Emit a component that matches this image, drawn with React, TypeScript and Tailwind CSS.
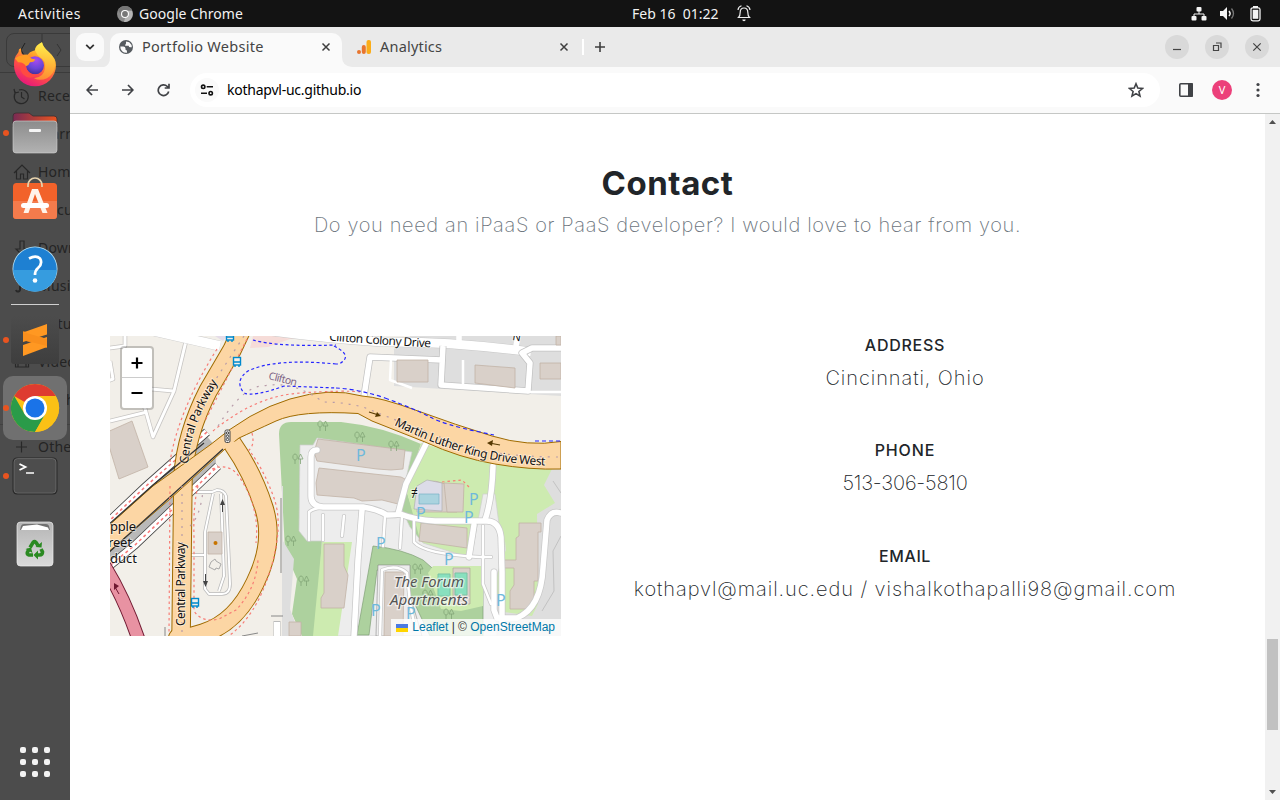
import React from "react";

const ui = "font-['Noto_Sans','Open_Sans',sans-serif]";
const brand = "font-['Inter','Liberation_Sans',sans-serif]";

/* ---------- top panel ---------- */

function TopPanel() {
  return (
    <header className={`${ui} flex h-[27px] shrink-0 items-center bg-[#131313] text-[14px] leading-[27px] text-[#f2f2f2]`}>
      <span className="w-[117px] pl-[18px] tracking-[0.45px]">Activities</span>
      <svg width="16" height="16" viewBox="0 0 16 16">
        <circle cx="8" cy="8" r="8" fill="#8a8a8a" />
        <path d="M8 0a8 8 0 0 1 7 4H8a4 4 0 0 0-3.6 5.5L1 4a8 8 0 0 1 7-4Z" fill="#767676" />
        <path d="M12 8a4 4 0 0 1-4 4l-1 4a8 8 0 0 0 8-11h-4.500Z" fill="#b5b5b5" />
        <circle cx="8" cy="8" r="4" fill="#fff" />
        <circle cx="8" cy="8" r="2.900" fill="#777" />
      </svg>
      <span className="ml-[6px] w-[493px] tracking-[0.04px]">Google Chrome</span>
      <span className="w-[105px] whitespace-pre tracking-[0px]">Feb 16  01:22</span>
      <svg width="14" height="17" viewBox="0 0 14 17" fill="none" stroke="#eee" strokeWidth="1.200">
        <path d="M1.500 12.500h11c-1.400-1.300-1.700-2.600-1.700-5.300C10.800 4.500 9.500 3 7 3S3.200 4.500 3.200 7.200c0 2.700-.3 4-1.700 5.300Z" />
        <path d="M5.300 14.500a1.700 1.700 0 0 0 3.400 0Z" fill="#eee" stroke="none" />
        <path d="M1 5C1.200 3 2.300 1.500 4.500.8M13 5c-.2-2-1.300-3.500-3.500-4.200" />
      </svg>
      <div className="ml-auto flex items-center gap-[13px] pr-[18px]">
        <svg width="16" height="14" viewBox="0 0 16 14" fill="#f4f4f4">
          <rect x="5.500" width="5" height="4.500" rx="1" />
          <rect x="0.500" y="9" width="5" height="4.500" rx="1" />
          <rect x="10.500" y="9" width="5" height="4.500" rx="1" />
          <path d="M8 4v3M3 9.500V7h10v2.500" fill="none" stroke="#f4f4f4" strokeWidth="1" />
        </svg>
        <svg width="15" height="15" viewBox="0 0 15 15">
          <path d="M0 5h3l4-4v13l-4-4H0Z" fill="#f4f4f4" />
          <path d="M9 5q2.200 2.500 0 5" fill="none" stroke="#f4f4f4" strokeWidth="1.500" />
          <path d="M11.500 2.500q4 5 0 10" fill="none" stroke="#777" strokeWidth="1.300" />
        </svg>
        <svg width="14" height="16" viewBox="0 0 14 16">
          <rect x="3" y="1.800" width="9" height="13" rx="1.800" fill="none" stroke="#f4f4f4" strokeWidth="1.300" />
          <rect x="5" y="0" width="5" height="2" fill="#f4f4f4" />
          <rect x="4.700" y="3.800" width="5.600" height="9" fill="#f4f4f4" />
        </svg>
      </div>
    </header>
  );
}

/* ---------- dock ---------- */

const places = ["Recent", "Starred", "Home", "Documents", "Downloads", "Music", "Pictures", "Videos", "Trash"];

function FilesWindow() {
  return (
    <div className={`${ui} absolute inset-0 overflow-hidden text-[14px] tracking-[0.2px] text-[#242424]`}>
      <div className="h-[46px] border-b border-[#3b3b3b] pl-[6px] pt-[6px]">
        <div className="h-[34px] w-[80px] rounded-lg border border-[#3a3a3a]">
          <svg width="70" height="32" fill="none" stroke="#343434">
            <path d="M35 0v32" /><path d="M18 9l-4 7 4 7" stroke="#202020" /><path d="M50 10l4 6-4 6" />
          </svg>
        </div>
      </div>
      <div className="pt-[4px]">
        {places.map((p) => (
          <div key={p} className="flex h-[38px] items-center pl-[38px] leading-none">{p}</div>
        ))}
      </div>
      <div className="mt-[5px] flex h-[44px] items-center border-t border-[#414141] pl-[38px]">Other</div>
      <svg className="absolute inset-0" width="70" height="460" fill="none" stroke="#282828" strokeWidth="1.200">
        <path d="M16 65a7 7 0 1 0 3-2M14 62l1 4 4-1M21.500 65v5l3 2" />
        <path d="M14 146l8-8 8 8M16.500 144v8h4v-5h3v5h4v-8" />
        <path d="M20 214h4v8h4l-6 6-6-6h4Z" />
        <path d="M20 263v-9l9-2v8M20 262a2 2 0 1 1-4 1" strokeWidth="2" />
        <path d="M15.500 329h13v11h-13ZM18 329v11M26 329v11" />
        <path d="M16 420h11M21.500 414.500v11" />
      </svg>
    </div>
  );
}

function Slot({ active, running, className, children }: { active?: boolean; running?: boolean; className?: string; children: React.ReactNode }) {
  return (
    <div className={`relative h-[64px] w-[70px] shrink-0 ${className ?? ""}`}>
      <svg width="70" height="64" viewBox="0 0 70 64">
        {active && <rect x="3" y="0" width="64" height="64" rx="10" fill="#707070" />}
        {running && <circle cx="6" cy="32" r="3" fill="#e95420" />}
        {children}
      </svg>
    </div>
  );
}

function Dock() {
  return (
    <aside className="relative flex w-[70px] shrink-0 flex-col gap-[4px] bg-[#4c4c4c] pb-[6px] pt-[6px]">
      <FilesWindow />
      <Slot>
        <defs>
          <linearGradient id="ff" x1=".8" y1="0" x2=".3" y2="1">
            <stop offset="0" stopColor="#fff44f" /><stop offset=".35" stopColor="#ffa52a" />
            <stop offset=".65" stopColor="#ff4f45" /><stop offset="1" stopColor="#e5157e" />
          </linearGradient>
          <radialGradient id="ffp" cx=".55" cy=".2" r=".8">
            <stop offset="0" stopColor="#a94cf0" /><stop offset=".6" stopColor="#6a45d8" /><stop offset="1" stopColor="#452f9e" />
          </radialGradient>
          <linearGradient id="fy" x1="0" y1="0" x2="0" y2="1">
            <stop offset="0" stopColor="#fff14d" /><stop offset="1" stopColor="#ff982f" />
          </linearGradient>
        </defs>
        <g transform="translate(0 -.7)">
          <path d="M21 16q0 4 1 6l5 1 3-3q2-1 5-2 0-5 7-8 1 5 7 10 7 6 7 13A21 21 0 0 1 14 33q0-8 3-11 2-2 2-5Z" fill="url(#ff)" />
          <path d="M42 10q1 5 6 9 8 7 7 15-1 8-8 12-7 3-13 0 10-1 11-10 1-8-5-11-3-2-5-7 1-5 7-8Z" fill="url(#fy)" opacity=".85" />
          <circle cx="35" cy="33" r="9" fill="url(#ffp)" />
          <path d="M15 26q4-3 8-3 5-2 6 1 2 3 6 3 0 3-5 3-1 3-4 4-3-5-8-4Z" fill="#ff9d25" />
          <path d="M20 31q5 0 6 4 2 8 12 7-8 7-15 0-4-5-3-11Z" fill="#ff4a42" />
        </g>
      </Slot>
      <Slot running>
        <defs>
          <linearGradient id="fo" x1="0" x2="1"><stop offset="0" stopColor="#7a2a53" /><stop offset="1" stopColor="#e95420" /></linearGradient>
          <linearGradient id="fg" x1="0" y1="0" x2="0" y2="1"><stop offset="0" stopColor="#8c8c8c" /><stop offset="1" stopColor="#b2b2b2" /></linearGradient>
        </defs>
        <g transform="translate(0 -1)">
          <path d="M13 16q0-3 3-3h13l4 3h21q3 0 3 3v8H13Z" fill="url(#fo)" stroke="#3a2d30" strokeWidth=".8" />
          <rect x="13" y="21" width="44" height="32" rx="3" fill="url(#fg)" stroke="#d5d5d5" strokeWidth=".6" />
          <rect x="29" y="29" width="12" height="3" rx="1" fill="#f5f5f5" />
        </g>
      </Slot>
      <Slot>
        <rect x="13" y="14" width="44" height="36" rx="3.500" fill="#f2622a" />
        <path d="M13 32h44v14.500q0 3.500-3.500 3.500h-37q-3.500 0-3.500-3.500Z" fill="#f47b4c" />
        <path d="M28 18v-2a7 7 0 0 1 14 0v2" fill="none" stroke="#e8d3ad" strokeWidth="1.700" />
        <path d="M32 20h6l9.500 24h-5L35 25l-6.500 19H23.500Z" fill="#fff4ea" />
        <rect x="21" y="34" width="28" height="5" rx="2.500" fill="#fff" />
      </Slot>
      <Slot>
        <circle cx="35" cy="32" r="22.500" fill="#b8e2f5" />
        <circle cx="35" cy="32" r="21.700" fill="#1e80d2" />
        <path d="M13.300 33h43.400a21.700 21.700 0 0 1-43.400 0Z" fill="#369cdf" />
        <path d="M29 21.500q7-3.800 11 0 3 5-2 9.500-3 2.500-3 7" fill="none" stroke="#fff" strokeWidth="2.700" />
        <circle cx="35" cy="43.500" r="2.300" fill="#fff" />
      </Slot>
      <div className="relative mx-[11px] -mt-[1px] -mb-[1px] h-px shrink-0 bg-[#d0d0d0]" />
      <Slot running>
        <defs><linearGradient id="sb" x1="0" y1="0" x2="0" y2="1"><stop offset="0" stopColor="#4c4c4c" /><stop offset="1" stopColor="#3e3e3e" /></linearGradient></defs>
        <rect x="11" y="8" width="48" height="48" rx="3" fill="url(#sb)" />
        <path d="M23 32l24 8v-9l-24-8Z" fill="#d97b16" />
        <path d="M23 24.500L47 16v10.500L23 34Z" fill="#ff9822" />
        <path d="M23 37l24-8v10L23 48Z" fill="#ff9822" />
        <path d="M23 32V24l24 7v7Z" fill="#f98f1d" />
      </Slot>
      <Slot active running>
        <circle cx="35" cy="32" r="24" fill="#fbc116" />
        <path d="M35 32L14.200 20A24 24 0 0 1 55.800 20H35Z" fill="#de3b30" />
        <path d="M14.200 20A24 24 0 0 0 35 56l10.400-18L35 32l-10.400 6Z" fill="#2a9b49" />
        <path d="M35 20h20.800a24 24 0 0 1-20.800 36l10.400-18Z" fill="#fbc116" />
        <circle cx="35" cy="32" r="12" fill="#fff" />
        <circle cx="35" cy="32" r="9.500" fill="#1a73e8" />
      </Slot>
      <Slot running>
        <rect x="12.500" y="13.500" width="45" height="37" rx="4.500" fill="#292929" />
        <rect x="14" y="14.600" width="42" height="34.500" rx="3.500" fill="#4d4d4d" stroke="#777" strokeWidth=".7" />
        <path d="M19.500 20l6 3-6 3" fill="none" stroke="#fff" strokeWidth="1.800" />
        <path d="M26 29h8" stroke="#fff" strokeWidth="1.500" />
      </Slot>
      <Slot>
        <defs><linearGradient id="tr" x1="0" y1="0" x2="0" y2="1"><stop offset="0" stopColor="#b5b5b5" /><stop offset="1" stopColor="#dadada" /></linearGradient></defs>
        <rect x="17" y="10" width="36" height="44" rx="3.500" fill="url(#tr)" stroke="#efefef" strokeWidth=".7" />
        <path d="M20 18l1-4q.5-2 3-2h22q2.500 0 3 2l1 4Z" fill="#707070" />
        <path d="M21 18l2-4 14-1.500 11 3 1 2.500Z" fill="#fff" />
        <g fill="none" stroke="#2b8a22" strokeWidth="3.600">
          <path d="M30 35.500l3-5q1.500-1.500 3 0l2 3" />
          <path d="M41 37l1.500 3q0 3-3 3h-2" />
          <path d="M33 43h-4q-2.500-.5-1.500-3l1.500-2.500" />
        </g>
        <path d="M35.500 35l6 .5 .5-5.500ZM38 38.500l-4.500 4.500 4.500 4.500ZM25.500 37l5.500-1.500 1.500 5.500Z" fill="#2b8a22" />
      </Slot>
      <Slot className="mt-auto">
        {[0, 1, 2].map((r) => [0, 1, 2].map((c) => (
          <rect key={`${r}${c}`} x={20 + c * 12} y={17 + r * 12} width="6" height="6" rx="2" fill="#f3f3f3" />
        )))}
      </Slot>
    </aside>
  );
}

/* ---------- browser chrome ---------- */

function Close() {
  return (
    <svg width="10" height="10" viewBox="0 0 10 10" stroke="#3f3f3f" strokeWidth="1.500"><path d="M1.500 1.500l7 7M8.500 1.500l-7 7" /></svg>
  );
}

function TabStrip() {
  return (
    <div className={`${ui} flex h-[40px] bg-[#eaeaea] text-[14.500px] leading-[20px] text-[#444]`}>
      <div className="ml-[6px] mt-[6px] flex size-[28px] items-center justify-center rounded-[9px] bg-[#fafafa]">
        <svg width="10" height="6" fill="none" stroke="#333" strokeWidth="1.800"><path d="M1.200 .8L5 4.600 8.800 .8" /></svg>
      </div>
      <svg className="mt-auto" width="6" height="10"><path d="M6 0v10H0Q6 8 6 0Z" fill="#fafafa" /></svg>
      <div className="mt-[6px] flex h-[34px] w-[232px] items-center rounded-t-[10px] bg-[#fafafa] pb-[6px] pl-[9px]">
        <svg width="14" height="14" viewBox="0 0 14 14">
          <circle cx="7" cy="7" r="7" fill="#565b60" />
          <path d="M1.300 6.500h3q2.200 0 2.200 2v1.300q1.500 0 1.500 1.700v1.200a5.800 5.800 0 0 1-6.700-6.200ZM7 3.200V1.400l3.300.8q2.500 2 2.500 5h-1.500q-1.600 0-1.600-1.500H6.200V4.500q.8 0 .8-1.300Z" fill="#fafafa" />
        </svg>
        <span className="ml-[9px] pb-[2px] tracking-[0.28px]">Portfolio Website</span>
        <span className="ml-auto mr-[11px]"><Close /></span>
      </div>
      <svg className="mt-auto" width="10" height="10"><path d="M0 0v10h10Q0 9 0 0Z" fill="#fafafa" /></svg>
      <div className="flex h-[40px] w-[216px] items-center pl-[5px]">
        <svg width="14" height="14" viewBox="0 0 14 14">
          <circle cx="2" cy="12" r="2" fill="#e8752e" /><rect x="4.800" y="5" width="4" height="9" rx="2" fill="#e8752e" /><rect x="9.500" width="4.500" height="14" rx="2" fill="#fbad18" />
        </svg>
        <span className="ml-[9px] pb-[2px] tracking-[0.2px]">Analytics</span>
        <span className="ml-auto mr-[-1px]"><Close /></span>
      </div>
      <div className="ml-[14px] mt-[12px] h-[16px] w-[2px] bg-white" />
      <svg className="ml-[10px] mt-[14px]" width="12" height="12" stroke="#3f3f3f" strokeWidth="1.600"><path d="M6 1v10M1 6h10" /></svg>
      <div className="ml-auto mr-[11px] flex items-center gap-[16px]">
        {["M8 14.500h8", "M8.500 10.500h5v5h-5ZM11 8h5v5", "M8.300 8.300l7.400 7.400M15.700 8.300l-7.400 7.400"].map((d) => (
          <svg key={d} width="24" height="24" fill="none" stroke="#444" strokeWidth="1.200"><circle cx="12" cy="12" r="12" fill="#d9d9d9" stroke="none" /><path d={d} /></svg>
        ))}
      </div>
    </div>
  );
}

function Toolbar() {
  return (
    <div className="flex h-[47px] items-center border-b border-[#c5c7c5] bg-[#fafafa]">
      <svg className="ml-[16px]" width="12" height="12" fill="none" stroke="#404246" strokeWidth="1.700"><path d="M12 6H1.300M6 1L1.100 6 6 11" /></svg>
      <svg className="ml-[24px]" width="12" height="12" fill="none" stroke="#404246" strokeWidth="1.700"><path d="M0 6h10.700M6 1l4.900 5L6 11" /></svg>
      <svg className="ml-[23px]" width="13" height="14" fill="none" stroke="#404246" strokeWidth="1.700"><path d="M11.700 8.500A5.300 5.300 0 1 1 10.300 3.500L12 5M12 .7V5H7.700" /></svg>
      <div className="ml-[20px] flex h-[34px] w-[970px] items-center rounded-full bg-white pl-[5px]">
        <div className="flex size-[24px] items-center justify-center rounded-full bg-[#fafafa]">
          <svg width="14" height="12" fill="none" stroke="#111" strokeWidth="1.600"><circle cx="3.200" cy="2.800" r="1.700" /><path d="M6.700 2.800H13M1 9.200h6" /><circle cx="10.700" cy="9.200" r="1.700" /></svg>
        </div>
        <span className={`${ui} ml-[8px] pb-[1px] text-[14px] tracking-[-0.24px] text-black`}>kothapvl-uc.github.io</span>
        <svg className="ml-auto mr-[16px]" width="16" height="16" viewBox="0 0 16 16" fill="none" stroke="#404246" strokeWidth="1.600"><path d="M8 1.800l1.800 4.300 4.700.4-3.600 3 1.100 4.600L8 11.600l-4 2.500 1.100-4.600-3.600-3 4.700-.4Z" /></svg>
      </div>
      <svg className="ml-[19px]" width="14" height="14"><rect x=".8" y=".8" width="12.400" height="12.400" rx="1" fill="none" stroke="#404246" strokeWidth="1.600" /><path d="M9 0h4q1 0 1 1v12q0 1-1 1H9Z" fill="#404246" /></svg>
      <div className={`${ui} ml-[19px] flex size-[20px] items-center justify-center rounded-full bg-[#ec407a] text-[11px] text-white`}>V</div>
      <svg className="ml-[24px]" width="4" height="16" fill="#404246"><circle cx="2" cy="2.500" r="1.600" /><circle cx="2" cy="8" r="1.600" /><circle cx="2" cy="13.500" r="1.600" /></svg>
    </div>
  );
}

/* ---------- map ---------- */

const parking = [[251, 119], [364, 163], [311, 177], [359, 181], [271, 207], [339, 223], [391, 264], [266, 274], [301, 277]];
const trees = [[250, 101], [284, 110], [188, 123], [181, 205], [194, 245], [308, 233], [318, 259], [339, 278], [213, 90]];

function Map() {
  return (
    <div className="relative h-[300px] w-[451px] shrink-0 overflow-hidden bg-[#f2efe9]">
      <svg width="451" height="300" viewBox="0 0 451 300" className="font-['Noto_Sans',sans-serif]">
        <defs>
          <path id="cp1" d="M78 128Q80 104 88 84T113 38" />
          <path id="mlk" d="M284 89Q320 107 358 118T451 130" />
          <path id="ccd" d="M219 4.500Q275 9 330 12" />
        </defs>
        {/* land use */}
        <path d="M284 11H451V60L284 50Z" fill="#dedede" />
        <path d="M300 0H451V20H300Z" fill="#dedede" />
        <path d="M143 0h92l-5 3h-50l-22 8-18 1Z" fill="#f6dcd8" />
        <path d="M105 0h12l-4 5Z" fill="#e5dce8" />
        <path d="M169 98q0-12 12-12h50q40 4 80 22l-15 45 20 65 10 82H192l-10-22 5-35-12-28Z" fill="#add19e" />
        <path d="M311 107l45 13 60 13h26l-20 34-3 133h-75l-35-100-13-47Z" fill="#cdebb0" />
        <path d="M441 133h10v167H370l20-42 10-110 20-7Z" fill="#dedede" />
        <path d="M382 128l60 5-8 16 11 18-18 11 1 90-6 12-28-4-4-50 6-12-4-36-12-12Z" fill="#cdebb0" />
        <path d="M443 145l8 12M451 200l-8 15 1 40-12 20" fill="none" stroke="#c2c2c2" />
        <path d="M173 150v55l11 18-4 50 10 27h-18V150Z" fill="#dedede" />
        <path d="M190 109h13l4-7 95 14-12 54 10 21 13 16 48 15 12-64h12l8 60-7 25 1 57H208l4-95h-15l-8-10Z" fill="#ededed" stroke="#cfcfcf" strokeWidth=".7" />
        <path d="M212 206h30l-14 94h-25Z" fill="#cdebb0" />
        <path d="M263 210q30 3 50 14l16 14 44 4v58h-53l-30-63-23-3-8 65h-12Z" fill="#add19e" stroke="#809f76" strokeWidth=".7" />
        <path d="M323 230h50v40l-22 5-20-2-13-36Z" fill="#cdebb0" />
        <path d="M343 232h17v36h-17Z" fill="#d9d0c9" stroke="#a89d92" strokeWidth=".6" />
        <path d="M268 229h32v30l12 41h-46Z" fill="#ededed" stroke="#777" strokeWidth=".5" />
        {/* minor roads */}
        <g fill="none" stroke="#c6c4c2" strokeWidth="4.500" strokeLinejoin="round">
          <path d="M0 85l37-9M76 5l-12 50-21 46-14-50M15 0v10L0 12M0 25l3 18-5 2M41 53l22 2" />
        </g>
        <g fill="none" stroke="#fff" strokeWidth="3" strokeLinejoin="round">
          <path d="M0 85l37-9M76 5l-12 50-21 46-14-50M15 0v10L0 12M0 25l3 18-5 2M41 53l22 2" />
        </g>
        <g transform="translate(0 150)" fill="none" strokeLinejoin="round">
          <path d="M84 6h18l5-2q7 0 9 6l4 88q0 10-8 10H99l-4-5V46l8-38M111 8l3 82-5 15M79 69h16" stroke="#bbb" strokeWidth="3.500" />
          <path d="M84 6h18l5-2q7 0 9 6l4 88q0 10-8 10H99l-4-5V46l8-38M111 8l3 82-5 15M79 69h16" stroke="#fff" strokeWidth="2" />
        </g>
        <path d="M44-5l66 15" stroke="#c8c8c8" strokeWidth="10.500" />
        <path d="M44-5l66 15" stroke="#fff" strokeWidth="9.500" />
        <path d="M155-6Q210 2 273 6Q340 5 421 16" fill="none" stroke="#c8c8c8" strokeWidth="10" />
        <path d="M155-6Q210 2 273 6Q340 5 421 16" fill="none" stroke="#fff" strokeWidth="9" />
        <g fill="none" strokeLinejoin="round">
          <g stroke="#c2c2c2" strokeWidth="7">
            <path d="M254 60l6-39 72 3M333 10l-2 39 87 6 2-28-8-10 10-5h30" />
          </g>
          <g stroke="#fff" strokeWidth="5.500">
            <path d="M254 60l6-39 72 3M333 10l-2 39 87 6 2-28-8-10 10-5h30M349 0v8M405 15l3-15" />
          </g>
          <path d="M281 24l-1 20 22 8M353 24v24M417 56h34" stroke="#fff" strokeWidth="2.500" />
        </g>
        {/* buildings */}
        <g fill="#d9d0c9" stroke="#c2b2a6" strokeWidth=".8">
          <path d="M-5 97l27-12 16 46-29 12Z" />
          <path d="M287 24h31v22h-31ZM365 29l40 3v20l-40-5ZM430 27h21v16h-21ZM446 0h5v9h-5Z" />
          <path d="M208 103l87 11-2 19-12 1-14-1-60-8-3-9Z" />
          <path d="M209 132l82 9 4 2-3 26-20-5-20 1-8-3-37-3-1-12Z" />
          <path d="M312 150q7-8 20-3l15 5v24h-40V152Z" />
          <path d="M334 147l20 1-1 28h-16ZM311 187l46 5v20l-48-7Z" />
          <path d="M98 196h14v22H98ZM214 208h20v22l4 9-4 33h-23v-10l3-5Z" />
          <path d="M409 187h22v9h-3v49h-4v28h-24v-18l4-6v-17h-12v-8h14v-22l3-2Z" />
          <path d="M275 236h19l-1 64h-19ZM179 286h12v14h-12Z" />
        </g>
        <path d="M307 150l10-6 15 3v28l-28-2Z" fill="#dcdce8" stroke="#aaa" strokeWidth=".6" />
        <path d="M309 158h20v10h-20Z" fill="#aad3df" stroke="#79b3c5" strokeWidth=".7" />
        <path d="M328 238h12v22h-12ZM345 237h12v22h-12Z" fill="#88e0be" stroke="#7ac3a4" />
        <path d="M101 226l4-3 1 2 5 3-2 5-3-1-1 2-6-3Z" fill="#f2efe9" stroke="#aaa" />
        <circle cx="105.500" cy="207" r="2" fill="#c77400" />
        {/* estate roads */}
        {["#c9c9c9", "#fff"].map((c, i) => (
          <g key={c} fill="none" stroke={c} strokeLinejoin="round" strokeLinecap="round">
            <path strokeWidth={i ? 5.500 : 7} d="M207 114q-6 0-6 7v39q0 10 12 11h40q14 2 24 8 10 0 13-1 15 6 35 7l50 0q14-1 16 16l1 35v55M252 174l-4 50-4 76M288 178l8-30 20-40M375 184q7-20 8-54M384 236v38l3 8h20q24-10 26-50l4-48q4-10 14-7M364 189l-5 32" />
            <path strokeWidth={i ? 2.500 : 4} d="M275 180l-2 30M292 180l-2 32M304 182v24q10 12 65 15h12M373 190v58l8 20M270 300l2-66q15-6 25 3l3 30 4 20M199 204v-28q5-4 12-4M213 204v-25M232 200l2-20" />
          </g>
        ))}
        {/* rail shading and bridge */}
        <path d="M0 184L95 98 105 110 106 128 25 206 0 226Z" fill="#b9b9b9" />
        <path d="M-3 187L35 151 97 96M-3 232L25 209 108 130" fill="none" stroke="#444" strokeWidth="8.500" />
        <path d="M-3 187L35 151 97 96M-3 232L25 209 108 130" fill="none" stroke="#fff" strokeWidth="7" />
        <path d="M-3 187L35 151 97 96M-3 232L25 209 108 130" fill="none" stroke="#f87a7a" strokeWidth="1.600" strokeDasharray="3 3" />
        {/* primary roads */}
        <g fill="none" strokeLinejoin="round">
          <path d="M131-5L122 14 98 55Q76 98 73 140L71 305" stroke="#a06b00" strokeWidth="19.500" />
          <path d="M122 107Q143 137 154 172T145 247Q126 287 93 297T70 300" stroke="#a06b00" strokeWidth="19.500" />
          <path d="M131-5L122 14 98 55Q76 98 73 140L71 305" stroke="#fcd6a4" strokeWidth="17.500" />
          <path d="M122 107Q143 137 154 172T145 247Q126 287 93 297T70 300" stroke="#fcd6a4" strokeWidth="17.500" />
        </g>
        <path d="M-4 192L43 150 100 109Q140 75 180 63T252 60Q270 61 308 75T382 100T451 105.500V133Q420 134 385 128T315 106L262 85 248 77.500Q190 74 166 85T129 102L115 113 60 163-4 218Z" fill="#fcd6a4" stroke="#a06b00" />
        <path d="M120 105l8 1-5 10-9-4Z" fill="#fcd6a4" />
        <path d="M-3 190L43 149 94 107M-3 218L113 113" fill="none" stroke="#333" strokeWidth="1.300" />
        <path d="M-6 229Q15 263 29 305" fill="none" stroke="#701830" strokeWidth="14" />
        <path d="M-6 229Q15 263 29 305" fill="none" stroke="#e892a2" strokeWidth="12" />
        {/* paths */}
        <g fill="none" stroke="#f87c75" strokeWidth="1.200" strokeDasharray="2.500 3">
          <path d="M107 13Q68 75 60 126M137 3L95 85M103 95Q145 60 190 57T250 56M142 97q3 12-3 17 15 20 25 48t-4 73-40 64M102 133q18-7 28 9 20 30 16 65M60 150l-1 148M88 150q-5 20-4 50v75q8 12 25 8l17-9q20-21 22-50M332 146l20-2 7 7" />
        </g>
        <path d="M143 4q25 7 83 5M226 28Q165 22 138 35q-14 10-4 22 10 4 40-7l52 2M224 10q20 10 5 18h-4" fill="none" stroke="#2525ff" strokeWidth="1.200" strokeDasharray="3 2.500" />
        <path d="M226 52Q248 53 275 62M275 62Q305 73 320 81T370 96L384 99M425 105h26" fill="none" stroke="#2525ff" strokeWidth="1.200" strokeDasharray="4 3" />
        <path d="M134 0L104 46 86 91M108 90q25-40 45-40 30-6 60 16 20 0 40 5 80 32 110 42 40 8 88 8M72 150v148M80 190q10-9 13-35" fill="none" stroke="#b79ba8" strokeWidth="1.200" strokeDasharray="2 6" />
        <path d="M171 162v75M55 300v-9M161 280h12M132 300l16-3" stroke="#888" strokeWidth="1" />
        <path d="M167 300v-15" stroke="#bbb" strokeWidth="7" />
        <path d="M167 300v-14" stroke="#fff" strokeWidth="6" />
        {/* arrows */}
        <g stroke="#553800" strokeWidth="1.200" fill="#553800">
          <path d="M259 76l8 2.500" /><path d="M271 80l-6 1 2-5Z" stroke="none" />
          <path d="M390 109l-8-1.500" /><path d="M377 107l6-3-1 6Z" stroke="none" />
        </g>
        <g stroke="#444" fill="#444"><path d="M112.500 176v-8" /><path d="M112.500 163l2.500 6h-5Z" stroke="none" /><path d="M95.500 238v8" /><path d="M95.500 251l-2.500-6h5Z" stroke="none" /></g>
        <path d="M9 258l-4-7" stroke="#701830" /><path d="M4 247l5 3-5 4Z" fill="#701830" />
        {/* symbols */}
        {[[120, 1], [127, 26], [85, 267]].map(([x, y]) => (
          <g key={`${x}`} fill="none" stroke="#0089cd" strokeWidth="1.400"><rect x={x - 3.500} y={y - 4.500} width="7" height="7.500" fill="#f2efe9" /><path d={`M${x - 3} ${y}h6.500M${x - 2} ${y + 3}v2M${x + 2} ${y + 3}v2`} /></g>
        ))}
        <rect x="115" y="94" width="5" height="12.500" rx="1.500" fill="#eee" stroke="#444" />
        <g fill="none" stroke="#444"><circle cx="117.500" cy="97" r="1.200" /><circle cx="117.500" cy="100.300" r="1.200" /><circle cx="117.500" cy="103.500" r="1.200" /></g>
        <g fill="none" stroke="#81a576" strokeWidth=".8">
          {trees.map(([x, y]) => <path key={`${x}`} d={`M${x - 3} ${y + 5}v-4a2.200 3 0 1 1 .1 0M${x + 2.500} ${y + 5}v-5m-2.500 0l2.500-5 2.500 5Z`} />)}
        </g>
        <g fill="#6fb9dc" fontSize="16">{parking.map(([x, y]) => <text key={`${x}`} x={x - 5} y={y + 6}>P</text>)}</g>
        <g fill="#111" fontSize="12" stroke="#fff" strokeWidth="2" strokeOpacity=".45" paintOrder="stroke">
          <text><textPath href="#cp1" textLength="88" lengthAdjust="spacing">Central Parkway</textPath></text>
          <text transform="translate(75 290) rotate(-90)" textLength="84">Central Parkway</text>
          <text><textPath href="#mlk" textLength="158">Martin Luther King Drive West</textPath></text>
          <text><textPath href="#ccd" textLength="102">Clifton Colony Drive</textPath></text>
          <text x="0" y="195" fontSize="13" textLength="26">pple</text>
          <text x="-2" y="211" fontSize="13" textLength="24">reet</text>
          <text x="0" y="227" fontSize="13" textLength="27">duct</text>
          <text x="402" y="4" fontSize="11" transform="rotate(10 402 4)">N</text>
          <text x="301" y="161" fontSize="12">≠</text>
        </g>
        <text transform="translate(158 43) rotate(14)" fontSize="10.500" fill="#7d6385" textLength="29">Clifton</text>
        <g fontSize="14" fontStyle="italic" fill="#555" stroke="#fff" strokeWidth="2.500" strokeOpacity=".6" paintOrder="stroke">
          <text x="284" y="250.500" textLength="70" lengthAdjust="spacingAndGlyphs">The Forum</text>
          <text x="280" y="268.500" textLength="78" lengthAdjust="spacingAndGlyphs">Apartments</text>
        </g>
      </svg>
      <div className="absolute left-[10px] top-[10px] w-[34px] rounded-[4px] border-2 border-black/20 bg-white bg-clip-padding">
        <svg width="30" height="60" stroke="#000" strokeWidth="2.200"><path d="M9.500 15h11M15 9.500v11M9.500 45h11" /><path d="M0 29.500h30" stroke="#ccc" strokeWidth="1" /></svg>
      </div>
      <div className="absolute bottom-0 right-0 flex h-[17px] items-center whitespace-pre bg-white/80 pl-[5px] pr-[6px] font-['Liberation_Sans',Arial,sans-serif] text-[12px] leading-[17px] text-[#0078a8]">
        <svg className="mr-[4px]" width="12" height="8"><path d="M0 0h12v4H0Z" fill="#4c7be1" /><path d="M0 4h12v4H0Z" fill="#ffd500" /></svg>
        Leaflet<span className="text-[#333]"> | © </span>OpenStreetMap
      </div>
    </div>
  );
}

/* ---------- page ---------- */

const details = [
  { label: "Address", value: "Cincinnati, Ohio", track: "tracking-[0.92px]", head: "tracking-[0.75px]" },
  { label: "Phone", value: "513-306-5810", track: "tracking-[-0.2px]", head: "tracking-[0.9px]" },
  { label: "Email", value: "kothapvl@mail.uc.edu / vishalkothapalli98@gmail.com", track: "tracking-[0.92px]", head: "tracking-[0.6px]" },
];

function ContactPage() {
  return (
    <main className={`${brand} flex min-w-0 flex-1 flex-col bg-white text-[#212529]`}>
      <div className="pt-[48px] text-center">
        <h2 className="text-[33px] font-bold leading-[42px] tracking-[0.55px]">Contact</h2>
        <p className="mt-[6px] text-[20px] font-extralight leading-[30px] tracking-[0.63px] text-[#6c757d]">Do you need an iPaaS or PaaS developer? I would love to hear from you.</p>
      </div>
      <div className="mt-[96px] flex pl-[40px]">
        <Map />
        <div className="ml-[43px] flex w-[602px] flex-col text-center">
          {details.map((d) => (
            <div key={d.label} className="h-[105.400px]">
              <h3 className={`text-[16px] font-medium uppercase leading-[19px] ${d.head}`}>{d.label}</h3>
              <p className={`mt-[8px] whitespace-nowrap text-[20px] font-extralight leading-[30px] ${d.track}`}>{d.value}</p>
            </div>
          ))}
        </div>
      </div>
    </main>
  );
}

function Scrollbar() {
  return (
    <div className="flex w-[15px] shrink-0 flex-col items-center bg-[#f1f1f1]">
      <svg width="15" height="15"><path d="M4 10h7L7.500 6Z" fill="#505050" /></svg>
      <div className="mt-[510px] h-[91px] w-[11px] bg-[#c1c1c1]" />
      <svg className="mt-auto" width="15" height="15"><path d="M4 5h7L7.500 9Z" fill="#505050" /></svg>
    </div>
  );
}

export default function App() {
  return (
    <div className="flex h-[800px] w-[1280px] flex-col overflow-hidden">
      <TopPanel />
      <div className="flex min-h-0 flex-1">
        <Dock />
        <section className="flex min-w-0 flex-1 flex-col">
          <TabStrip />
          <Toolbar />
          <div className="flex min-h-0 flex-1">
            <ContactPage />
            <Scrollbar />
          </div>
        </section>
      </div>
    </div>
  );
}
